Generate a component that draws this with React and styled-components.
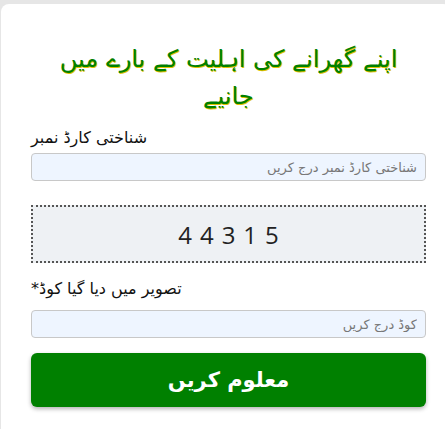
import React from "react";
import styled, { createGlobalStyle } from "styled-components";

const GlobalStyle = createGlobalStyle`
  html, body {
    margin: 0;
    padding: 0;
    background: #e6e6e6;
    overflow: hidden;
  }
  body {
    font-family: "DejaVu Sans", "Noto Sans", sans-serif;
  }
`;

function App() {
  return (
    <>
      <GlobalStyle />
      <Page>
        <Card>
          <Title>
            اپنے گھرانے کی اہلیت کے بارے میں
            <br />
            جانیے
          </Title>

          <Field $gap={2}>
            <Label>شناختی کارڈ نمبر</Label>
            <Input placeholder="شناختی کارڈ نمبر درج کریں" />
          </Field>

          <Captcha>44315</Captcha>

          <Field $gap={8}>
            <Label>تصویر میں دیا گیا کوڈ*</Label>
            <Input placeholder="کوڈ درج کریں" />
          </Field>

          <SubmitButton type="button">معلوم کریں</SubmitButton>
        </Card>
      </Page>
    </>
  );
}
export default App;

const Page = styled.div`
  padding: 4px 0 0 1px;
  height: 429px;
  box-sizing: border-box;
`;

const Card = styled.div`
  width: 450px;
  height: 440px;
  box-sizing: border-box;
  background: #fff;
  border-radius: 8px;
  padding: 37px 25px 0 30px;
  display: flex;
  flex-direction: column;
`;

const Title = styled.h1`
  margin: 0 0 10px;
  padding: 0;
  direction: rtl;
  text-align: center;
  font-size: 24px;
  line-height: 37px;
  font-weight: normal;
  color: #008000;
  text-shadow: 1px 1px 0 #e0c200;
`;

const Field = styled.div`
  display: flex;
  flex-direction: column;
  gap: ${(p) => p.$gap}px;
`;

const Label = styled.label`
  direction: rtl;
  text-align: left;
  font-size: 16px;
  line-height: 26px;
  color: #111;
`;

const Input = styled.input`
  direction: rtl;
  height: 28px;
  box-sizing: border-box;
  border: 1px solid #c8c8c8;
  border-radius: 4px;
  background: #eef5ff;
  padding: 0 8px;
  font-family: "DejaVu Sans", sans-serif;
  font-size: 13px;
  outline: none;

  &::placeholder {
    color: #777;
  }
`;

const Captcha = styled.div`
  margin: 24px 0 13px;
  height: 58px;
  box-sizing: border-box;
  border: 2px dotted #555;
  background: #eef1f4;
  display: flex;
  align-items: center;
  justify-content: center;
  font-family: "Open Sans", "DejaVu Sans", sans-serif;
  font-size: 24px;
  letter-spacing: 8px;
  padding-left: 8px;
  color: #222;
`;

const SubmitButton = styled.button`
  margin-top: 15px;
  height: 54px;
  border: none;
  border-radius: 6px;
  background: #008000;
  color: #fff;
  font-family: "DejaVu Sans", sans-serif;
  font-weight: bold;
  font-size: 21px;
  box-shadow: 0 2px 4px rgba(0, 0, 0, 0.3);
  direction: rtl;
`;
